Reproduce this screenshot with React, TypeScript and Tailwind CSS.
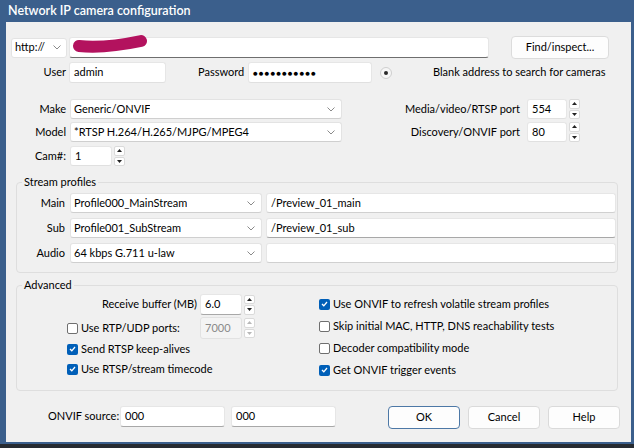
import React from "react";

const Chevron = () => (
  <svg width="8" height="5" viewBox="0 0 8 5" className="shrink-0">
    <path d="M0.5 0.5 L4 4 L7.5 0.5" fill="none" stroke="#8a8a8a" strokeWidth="1" />
  </svg>
);

const Select = ({ value, className }: { value: string; className: string }) => (
  <div
    className={
      "flex items-center justify-between bg-white border border-[#e3e3e3] border-b-[#cfcfcf] rounded-[3px] pl-[3px] pr-[6px] " +
      className
    }
  >
    <span className="truncate">{value}</span>
    <Chevron />
  </div>
);

const Input = ({ value, className }: { value?: string; className: string }) => (
  <div
    className={
      "flex items-center bg-white border border-[#e6e6e6] border-b-[#a8a8a8] rounded-[3px] px-[4px] " + className
    }
  >
    {value}
  </div>
);

const Tri = ({ up, color }: { up?: boolean; color: string }) => (
  <svg width="5" height="3" viewBox="0 0 5 3">
    <path d={up ? "M0 3 L2.5 0 L5 3Z" : "M0 0 L2.5 3 L5 0Z"} fill={color} />
  </svg>
);

const Spin = ({ disabled }: { disabled?: boolean }) => {
  const c = disabled ? "#b8b8b8" : "#222";
  return (
    <div className="flex flex-col w-[11px] h-[20px] ml-[2px] gap-[1px]">
      <div className="flex-1 flex items-center justify-center bg-white border border-[#dadada] rounded-[2px]">
        <Tri up color={c} />
      </div>
      <div className="flex-1 flex items-center justify-center bg-white border border-[#dadada] rounded-[2px]">
        <Tri color={c} />
      </div>
    </div>
  );
};

const Check = ({ checked, label }: { checked?: boolean; label: string }) => (
  <div className="flex items-center whitespace-nowrap">
    {checked ? (
      <div className="w-[11px] h-[11px] rounded-[2px] bg-[#005fb8] flex items-center justify-center">
        <svg width="7" height="6" viewBox="0 0 7 6">
          <path d="M1 3 L2.8 4.8 L6 1" fill="none" stroke="white" strokeWidth="1.3" />
        </svg>
      </div>
    ) : (
      <div className="w-[11px] h-[11px] rounded-[2px] border border-[#6f6f6f] bg-white" />
    )}
    <span className="ml-[3px]">{label}</span>
  </div>
);

const Button = ({ label, className }: { label: string; className: string }) => (
  <div
    className={
      "flex items-center justify-center bg-[#fdfdfd] border rounded-[4px] h-[23px] w-[72px] " + className
    }
  >
    {label}
  </div>
);

export default function App() {
  return (
    <div className="w-[634px] h-[448px] bg-[#3b5f8c] flex flex-col text-[11px] text-black font-['Lato',sans-serif] whitespace-nowrap overflow-hidden">
      <div className="h-[22px] flex items-center pl-[8px] text-white text-[12.5px] font-semibold">
        Network IP camera configuration
      </div>

      <div className="ml-[6px] mr-[3px] h-[420px] bg-[#f0f0f0] flex flex-col">
        {/* address row */}
        <div className="flex items-center mt-[14px] ml-[5px]">
          <div className="flex items-center justify-between w-[56px] h-[20px] bg-white border border-[#e3e3e3] rounded-[3px] pl-[3px] pr-[5px]">
            <span>http://</span>
            <Chevron />
          </div>
          <div className="relative ml-[2px] w-[420px] h-[21px] bg-white border border-[#e6e6e6] border-b-[#6e6e6e] rounded-[3px]">
            <svg width="82" height="24" viewBox="0 0 82 24" className="absolute left-[0px] top-[-4px]">
              <path
                d="M9 12 C30 14 52 11 71 7"
                fill="none"
                stroke="#b3125e"
                strokeWidth="12"
                strokeLinecap="round"
              />
            </svg>
          </div>
          <Button label="Find/inspect..." className="ml-[22px] w-[98px] h-[19px] border-[#dcdcdc]" />
        </div>

        {/* user row */}
        <div className="flex items-center mt-[3px] h-[21px]">
          <div className="w-[60px] text-right">User</div>
          <Input value="admin" className="ml-[3px] w-[97px] h-[21px] border-b-[#e0e0e0]" />
          <div className="ml-[32px] w-[50px]">Password</div>
          <Input
            value="●●●●●●●●●●●"
            className="w-[124px] h-[21px] border-b-[#e0e0e0] text-[8px] tracking-[1px]"
          />
          <div className="ml-[8px] w-[12px] h-[12px] rounded-full border border-[#cfcfcf] bg-[#f6f6f6] flex items-center justify-center">
            <div className="w-[4px] h-[4px] rounded-full bg-[#2a2a2a]" />
          </div>
          <div className="ml-[41px]">Blank address to search for cameras</div>
        </div>

        {/* make / model */}
        <div className="flex items-center mt-[16px] h-[20px]">
          <div className="w-[60px] text-right">Make</div>
          <Select value="Generic/ONVIF" className="ml-[4px] w-[272px] h-[20px]" />
          <div className="w-[178px] text-right">Media/video/RTSP port</div>
          <Input value="554" className="ml-[7px] w-[40px] h-[20px] border-b-[#e0e0e0]" />
          <Spin />
        </div>
        <div className="flex items-center mt-[3px] h-[20px]">
          <div className="w-[60px] text-right">Model</div>
          <Select value="*RTSP H.264/H.265/MJPG/MPEG4" className="ml-[4px] w-[272px] h-[20px]" />
          <div className="w-[178px] text-right">Discovery/ONVIF port</div>
          <Input value="80" className="ml-[7px] w-[40px] h-[20px] border-b-[#e0e0e0]" />
          <Spin />
        </div>
        <div className="flex items-center mt-[4px] h-[20px]">
          <div className="w-[60px] text-right">Cam#:</div>
          <Input value="1" className="ml-[4px] w-[42px] h-[20px] border-b-[#e0e0e0]" />
          <Spin />
        </div>

        {/* stream profiles */}
        <fieldset className="ml-[10px] mr-[13px] mt-[8px] border border-[#dedede] rounded-[4px] pb-[9px]">
          <legend className="ml-[5px] px-[2px] leading-[16px]">Stream profiles</legend>
          <div className="flex flex-col gap-[5px] pt-[3px]">
            <div className="flex items-center h-[20px]">
              <div className="w-[48px] text-right">Main</div>
              <Select value="Profile000_MainStream" className="ml-[5px] w-[192px] h-[20px]" />
              <Input value="/Preview_01_main" className="ml-[4px] w-[350px] h-[20px] border-b-[#d0d0d0]" />
            </div>
            <div className="flex items-center h-[20px]">
              <div className="w-[48px] text-right">Sub</div>
              <Select value="Profile001_SubStream" className="ml-[5px] w-[192px] h-[20px]" />
              <Input value="/Preview_01_sub" className="ml-[4px] w-[350px] h-[20px] border-b-[#707070]" />
            </div>
            <div className="flex items-center h-[20px]">
              <div className="w-[48px] text-right">Audio</div>
              <Select value="64 kbps G.711 u-law" className="ml-[5px] w-[192px] h-[20px]" />
              <Input className="ml-[4px] w-[350px] h-[20px] border-b-[#d0d0d0]" />
            </div>
          </div>
        </fieldset>

        {/* advanced */}
        <fieldset className="ml-[10px] mr-[13px] mt-[4px] border border-[#dedede] rounded-[4px] pb-[9px]">
          <legend className="ml-[5px] px-[2px] leading-[16px]">Advanced</legend>
          <div className="flex">
            <div className="w-[302px] flex flex-col">
              <div className="flex items-center h-[21px] mt-[1px]">
                <div className="w-[180px] text-right">Receive buffer (MB)</div>
                <Input value="6.0" className="ml-[3px] w-[42px] h-[21px] border-b-[#8a8a8a]" />
                <Spin />
              </div>
              <div className="flex items-center h-[22px] mt-[2px]">
                <div className="w-[183px] pl-[50px]">
                  <Check label="Use RTP/UDP ports:" />
                </div>
                <div className="flex items-center w-[42px] h-[22px] border border-[#e2e2e2] rounded-[3px] bg-[#f4f4f4] px-[4px] text-[#8a8a8a]">
                  7000
                </div>
                <Spin disabled />
              </div>
              <div className="flex items-center h-[20px] pl-[50px]">
                <Check checked label="Send RTSP keep-alives" />
              </div>
              <div className="flex items-center h-[20px] pl-[50px]">
                <Check checked label="Use RTSP/stream timecode" />
              </div>
            </div>
            <div className="flex flex-col">
              <div className="flex items-center h-[22px]">
                <Check checked label="Use ONVIF to refresh volatile stream profiles" />
              </div>
              <div className="flex items-center h-[22px]">
                <Check label="Skip initial MAC, HTTP, DNS reachability tests" />
              </div>
              <div className="flex items-center h-[22px]">
                <Check label="Decoder compatibility mode" />
              </div>
              <div className="flex items-center h-[22px]">
                <Check checked label="Get ONVIF trigger events" />
              </div>
            </div>
          </div>
        </fieldset>

        {/* bottom row */}
        <div className="flex items-start mt-[15px]">
          <div className="ml-[42px] w-[72px] h-[21px] flex items-center">ONVIF source:</div>
          <Input value="000" className="w-[105px] h-[21px] border-b-[#9a9a9a]" />
          <Input value="000" className="ml-[6px] w-[105px] h-[21px] border-b-[#9a9a9a]" />
          <Button label="OK" className="ml-[52px] border-[#4d78a6]" />
          <Button label="Cancel" className="ml-[8px] border-[#dadada]" />
          <Button label="Help" className="ml-[8px] border-[#dadada]" />
        </div>
      </div>

      <div className="mt-[2px] h-[4px] bg-[#262b31]" />
    </div>
  );
}
